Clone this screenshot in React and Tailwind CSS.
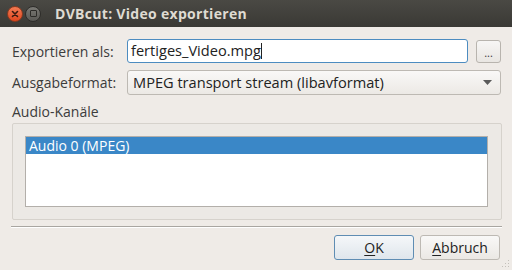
export default function App() {
  const font = { fontFamily: '"Open Sans", "DejaVu Sans", sans-serif' };
  return (
    <div className="relative w-[512px] h-[270px] bg-[#efebe7] flex flex-col overflow-hidden text-[14px] text-[#3c3c3c]" style={font}>
      <div className="h-[27px] flex items-center bg-gradient-to-b from-[#4a4944] to-[#3a3935] pl-[7px]">
        <div className="w-[16px] h-[16px] rounded-full bg-gradient-to-b from-[#f37a52] to-[#e0451b] border border-[#8a3a20] flex items-center justify-center">
          <svg width="8" height="8" viewBox="0 0 8 8"><path d="M1.5 1.5 L6.5 6.5 M6.5 1.5 L1.5 6.5" stroke="#3a1a10" strokeWidth="1.6" strokeLinecap="round" /></svg>
        </div>
        <div className="ml-[2px] w-[16px] h-[16px] rounded-full bg-gradient-to-b from-[#7a7974] to-[#5a5955] border border-[#2e2d2a] flex items-center justify-center">
          <div className="w-[7px] h-[7px] border-[1.5px] border-[#2c2b28] rounded-[1px]" />
        </div>
        <div className="ml-[14px] text-[14px] font-bold text-[#dfdbd2] tracking-[0.3px]">DVBcut: Video exportieren</div>
      </div>
      <div className="flex-1 flex flex-col px-[11px]">
        <div className="flex items-center mt-[12px] h-[24px]">
          <div className="w-[116px] pl-[1px]">Exportieren als:</div>
          <div className="w-[341px] h-[24px] bg-white border border-[#4d8cc0] rounded-[3px] flex items-center px-[3px] text-[14.6px] text-[#222]">
            fertiges_Video.mpg<span className="inline-block w-[1px] h-[16px] bg-[#222]" />
          </div>
          <div className="ml-[8px] w-[25px] h-[23px] border border-[#b8b4ae] rounded-[3px] bg-gradient-to-b from-[#f7f6f5] to-[#e9e6e2] flex items-center justify-center text-[11px] leading-none pt-[3px]">...</div>
        </div>
        <div className="flex items-center mt-[7px] h-[25px]">
          <div className="w-[116px] pl-[1px]">Ausgabeformat:</div>
          <div className="w-[374px] h-[25px] border border-[#bdb9b3] rounded-[3px] bg-gradient-to-b from-[#f9f8f7] to-[#ece9e5] flex items-center pl-[5px] pr-[8px] text-[14.6px] text-[#222]">
            <span className="flex-1">MPEG transport stream (libavformat)</span>
            <svg width="9" height="5" viewBox="0 0 9 5"><path d="M0 0 L9 0 L4.5 5 Z" fill="#5a5a5a" /></svg>
          </div>
        </div>
        <div className="mt-[7px] pl-[1px] h-[19px] flex items-center">Audio-Kanäle</div>
        <div className="mt-[2px] ml-[1px] w-[490px] h-[97px] border border-[#d6d2cc] rounded-[2px] bg-[#ece9e5] pl-[12px] pt-[12px]">
          <div className="w-[463px] h-[71px] bg-white border border-[#b3afaa]">
            <div className="h-[17px] bg-[#3a87c7] text-white text-[14px] leading-[17px] pl-[3px]">Audio 0 (MPEG)</div>
          </div>
        </div>
        <div className="mt-[6px] h-[2px] border-t border-[#a9a6a1] border-b-white border-b w-[491px]" />
        <div className="flex justify-end mt-[7px] pr-[0px] gap-[6px]">
          <div className="w-[80px] h-[25px] border border-[#5f8db3] rounded-[3px] bg-gradient-to-b from-[#f5f7f9] to-[#dfe6ec] flex items-center justify-center text-[14px] text-[#222]">
            <span><span className="underline underline-offset-2">O</span>K</span>
          </div>
          <div className="w-[80px] h-[25px] border border-[#bdb9b3] rounded-[3px] bg-gradient-to-b from-[#f9f8f7] to-[#ebe8e4] flex items-center justify-center text-[14px] text-[#222] mr-[1px]">
            <span><span className="underline underline-offset-2">A</span>bbruch</span>
          </div>
        </div>
      </div>
      <svg className="absolute right-[2px] bottom-[2px]" width="9" height="9" viewBox="0 0 9 9">
        <rect x="7" y="1" width="1" height="1" fill="#c4c0ba" />
        <rect x="4" y="4" width="1" height="1" fill="#c4c0ba" />
        <rect x="7" y="4" width="1" height="1" fill="#c4c0ba" />
        <rect x="1" y="7" width="1" height="1" fill="#c4c0ba" />
        <rect x="4" y="7" width="1" height="1" fill="#c4c0ba" />
        <rect x="7" y="7" width="1" height="1" fill="#c4c0ba" />
      </svg>
    </div>
  );
}
